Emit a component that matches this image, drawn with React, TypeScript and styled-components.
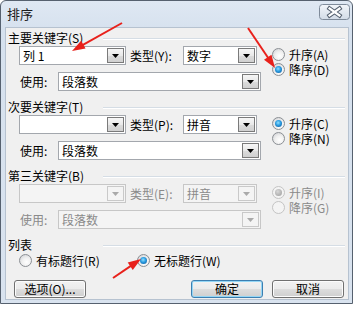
import React from "react";
import styled, { createGlobalStyle } from "styled-components";

const GlobalStyle = createGlobalStyle`
  html, body {
    margin: 0;
    padding: 0;
    background: #ffffff;
  }
  body {
    font-family: "Noto Sans CJK SC", "DejaVu Sans", sans-serif;
    font-size: 12px;
    color: #000;
  }
`;

type KeySectionProps = {
  title: string;
  keyValue: string;
  typeLabel: string;
  typeValue: string;
  asc: string;
  desc: string;
  ascChecked: boolean;
  disabled?: boolean;
};

const arrows = [
  { from: [122, 23], to: [72, 51] },
  { from: [248, 28], to: [275, 68] },
  { from: [113, 278], to: [141, 259] },
];

function arrowHead(from: number[], to: number[]) {
  const dx = to[0] - from[0];
  const dy = to[1] - from[1];
  const len = Math.sqrt(dx * dx + dy * dy);
  const ux = dx / len;
  const uy = dy / len;
  const bx = to[0] - ux * 13;
  const by = to[1] - uy * 13;
  const px = -uy * 4.5;
  const py = ux * 4.5;
  return {
    points: `${to[0]},${to[1]} ${bx + px},${by + py} ${bx - px},${by - py}`,
    end: [to[0] - ux * 10, to[1] - uy * 10],
  };
}

export default function App() {
  return (
    <>
      <GlobalStyle />
      <Window>
        <TitleBar>
          <Title>排序</Title>
          <CloseButton>
            <svg width="31" height="16" viewBox="0 0 31 16">
              <defs>
                <linearGradient id="cb" x1="0" y1="0" x2="0" y2="1">
                  <stop offset="0" stopColor="#f3f6fa" />
                  <stop offset="0.5" stopColor="#e2e8f0" />
                  <stop offset="1" stopColor="#d3dce7" />
                </linearGradient>
              </defs>
              <rect x="0.5" y="0.5" width="30" height="15" rx="3" fill="url(#cb)" stroke="#7f8b9a" />
              <path d="M10.5 4.5 L20.5 11.5 M20.5 4.5 L10.5 11.5" stroke="#55606f" strokeWidth="4.2" strokeLinecap="square" />
              <path d="M10.5 4.5 L20.5 11.5 M20.5 4.5 L10.5 11.5" stroke="#ffffff" strokeWidth="2.2" strokeLinecap="square" />
            </svg>
          </CloseButton>
        </TitleBar>
        <Body>
          <KeySection
            title="主要关键字(S)"
            keyValue="列 1"
            typeLabel="类型(Y):"
            typeValue="数字"
            asc="升序(A)"
            desc="降序(D)"
            ascChecked={false}
          />
          <KeySection
            title="次要关键字(T)"
            keyValue=""
            typeLabel="类型(P):"
            typeValue="拼音"
            asc="升序(C)"
            desc="降序(N)"
            ascChecked={true}
          />
          <KeySection
            title="第三关键字(B)"
            keyValue=""
            typeLabel="类型(E):"
            typeValue="拼音"
            asc="升序(I)"
            desc="降序(G)"
            ascChecked={true}
            disabled
          />
          <Header>
            <HeaderLabel>列表</HeaderLabel>
            <HeaderLine />
          </Header>
          <ListRow>
            <RadioItem $width={118}>
              <Radio $checked={false} />
              <span>有标题行(R)</span>
            </RadioItem>
            <RadioItem>
              <Radio $checked={true} />
              <span>无标题行(W)</span>
            </RadioItem>
          </ListRow>
          <ButtonRow>
            <Button>选项(O)...</Button>
            <ButtonGroup>
              <Button $default>确定</Button>
              <Button>取消</Button>
            </ButtonGroup>
          </ButtonRow>
        </Body>
        <Overlay width="357" height="309" viewBox="0 0 357 309">
          {arrows.map((a, i) => {
            const head = arrowHead(a.from, a.to);
            return (
              <g key={i}>
                <line
                  x1={a.from[0]}
                  y1={a.from[1]}
                  x2={head.end[0]}
                  y2={head.end[1]}
                  stroke="#e8211b"
                  strokeWidth="2"
                />
                <polygon points={head.points} fill="#e8211b" />
              </g>
            );
          })}
        </Overlay>
      </Window>
    </>
  );
}

function KeySection({ title, keyValue, typeLabel, typeValue, asc, desc, ascChecked, disabled }: KeySectionProps) {
  return (
    <Section>
      <Header>
        <HeaderLabel>{title}</HeaderLabel>
        <HeaderLine />
      </Header>
      <SectionBody>
        <Fields>
          <KeyRow>
            <Combo $w={107} value={keyValue} disabled={disabled} />
            <FieldLabel $width={57} $indent={4} $disabled={disabled}>
              {typeLabel}
            </FieldLabel>
            <Combo $w={74} value={typeValue} disabled={disabled} />
          </KeyRow>
          <UseRow>
            <FieldLabel $width={38} $disabled={disabled}>
              使用:
            </FieldLabel>
            <Combo $w={203} value="段落数" disabled={disabled} />
          </UseRow>
        </Fields>
        <Radios>
          <RadioItem $disabled={disabled}>
            <Radio $checked={ascChecked} $disabled={disabled} />
            <span>{asc}</span>
          </RadioItem>
          <RadioItem $disabled={disabled}>
            <Radio $checked={!ascChecked} $disabled={disabled} />
            <span>{desc}</span>
          </RadioItem>
        </Radios>
      </SectionBody>
    </Section>
  );
}

function Combo({ $w, value, disabled }: { $w: number; value: string; disabled?: boolean }) {
  return (
    <ComboBox $w={$w} $disabled={disabled}>
      <ComboText $disabled={disabled}>{value}</ComboText>
      <DropButton $disabled={disabled}>
        <svg width="7" height="4" viewBox="0 0 7 4">
          <path d="M0 0 H7 L3.5 4 Z" fill={disabled ? "#a9a9a9" : "#000"} />
        </svg>
      </DropButton>
    </ComboBox>
  );
}

const Window = styled.div`
  position: relative;
  width: 353px;
  height: 304px;
  box-sizing: border-box;
  border: 1px solid #56616f;
  border-radius: 6px 6px 0 0;
  background: linear-gradient(#dfe8f3, #d6e1ee 30px, #d9e3ef);
  display: flex;
  flex-direction: column;
  padding: 0 3px 3px 4px;
`;

const TitleBar = styled.div`
  height: 26px;
  display: flex;
  align-items: center;
  justify-content: space-between;
  padding: 0 0 0 2px;
`;

const Title = styled.div`
  font-size: 13px;
  color: #1b1b1b;
  line-height: 16px;
  margin-top: -1px;
`;

const CloseButton = styled.div`
  display: flex;
  margin-top: -5px;
  margin-right: -1px;
`;

const Body = styled.div`
  flex: 1;
  background: #f0f0f0;
  border: 1px solid #b6c2d0;
  padding: 2px 0 0 2px;
  display: flex;
  flex-direction: column;
  line-height: 16px;
`;

const Section = styled.div`
  display: flex;
  flex-direction: column;
  margin-bottom: 8px;
`;

const Header = styled.div`
  height: 16px;
  display: flex;
  align-items: center;
`;

const HeaderLabel = styled.div`
  width: 95px;
  white-space: nowrap;
`;

const HeaderLine = styled.div`
  flex: 1;
  margin: 2px 3px 0 0;
  border-top: 1px solid #d5dde5;
  border-bottom: 1px solid #ffffff;
`;

const SectionBody = styled.div`
  display: flex;
`;

const Fields = styled.div`
  display: flex;
  flex-direction: column;
  gap: 7px;
`;

const KeyRow = styled.div`
  display: flex;
  align-items: center;
  height: 19px;
  margin-left: 11px;
`;

const UseRow = styled.div`
  display: flex;
  align-items: center;
  height: 19px;
  margin-left: 12px;
`;

const FieldLabel = styled.span<{ $width: number; $indent?: number; $disabled?: boolean }>`
  width: ${(p) => p.$width}px;
  box-sizing: border-box;
  padding-left: ${(p) => p.$indent ?? 0}px;
  color: ${(p) => (p.$disabled ? "#8a8a8a" : "#000")};
  white-space: nowrap;
`;

const ComboBox = styled.div<{ $w: number; $disabled?: boolean }>`
  width: ${(p) => p.$w}px;
  height: 19px;
  box-sizing: border-box;
  border: 1px solid ${(p) => (p.$disabled ? "#c7c7c7" : "#a3a7ad")};
  background: ${(p) => (p.$disabled ? "#f4f4f4" : "#ffffff")};
  display: flex;
  align-items: center;
  padding: 1px;
`;

const ComboText = styled.span<{ $disabled?: boolean }>`
  flex: 1;
  padding-left: 2px;
  color: ${(p) => (p.$disabled ? "#8a8a8a" : "#000")};
  white-space: nowrap;
  overflow: hidden;
`;

const DropButton = styled.span<{ $disabled?: boolean }>`
  width: 17px;
  height: 15px;
  box-sizing: border-box;
  border: 1px solid ${(p) => (p.$disabled ? "#c9c9c9" : "#7a7a7a")};
  background: ${(p) =>
    p.$disabled ? "#f4f4f4" : "linear-gradient(#f6f6f6, #e9e9e9 50%, #dcdcdc 51%, #d0d0d0)"};
  display: flex;
  align-items: center;
  justify-content: center;
  padding-top: 1px;
`;

const Radios = styled.div`
  display: flex;
  flex-direction: column;
  margin-left: 11px;
  padding-top: 1px;
`;

const RadioItem = styled.label<{ $width?: number; $disabled?: boolean }>`
  display: flex;
  align-items: center;
  gap: 4px;
  height: 15px;
  line-height: 15px;
  white-space: nowrap;
  color: ${(p) => (p.$disabled ? "#8a8a8a" : "#000")};
  ${(p) => (p.$width ? `width: ${p.$width}px;` : "")}
`;

const Radio = styled.span<{ $checked: boolean; $disabled?: boolean }>`
  width: 13px;
  height: 13px;
  box-sizing: border-box;
  border-radius: 50%;
  border: 1px solid ${(p) => (p.$disabled ? "#c4c4c4" : "#8b8f94")};
  background: ${(p) =>
    p.$disabled
      ? "#f4f4f4"
      : "radial-gradient(circle at 60% 65%, #ffffff 0%, #f0f0f0 45%, #c9cbcf 100%)"};
  display: flex;
  align-items: center;
  justify-content: center;
  flex: none;
  &::after {
    content: "";
    display: ${(p) => (p.$checked ? "block" : "none")};
    width: 7px;
    height: 7px;
    border-radius: 50%;
    background: ${(p) =>
      p.$disabled
        ? "radial-gradient(circle at 40% 35%, #d8d8d8, #9c9c9c)"
        : "radial-gradient(circle at 45% 40%, #8fe0ff 0%, #2a9be0 45%, #0b4f91 100%)"};
  }
`;

const ListRow = styled.div`
  display: flex;
  align-items: center;
  height: 16px;
  margin: -1px 0 0 11px;
`;

const ButtonRow = styled.div`
  display: flex;
  justify-content: space-between;
  margin: 12px 4px 0 6px;
`;

const ButtonGroup = styled.div`
  display: flex;
  gap: 9px;
`;

const Button = styled.button<{ $default?: boolean }>`
  width: 72px;
  height: 18px;
  padding: 0;
  font-family: inherit;
  font-size: 12px;
  line-height: 14px;
  color: #000;
  border-radius: 3px;
  border: 1px solid ${(p) => (p.$default ? "#3c7fb1" : "#707070")};
  background: linear-gradient(#f2f2f2 0%, #ebebeb 50%, #dddddd 51%, #cfcfcf 100%);
  box-shadow: ${(p) => (p.$default ? "inset 0 0 0 1px #94d6f5" : "inset 0 0 0 1px #fcfcfc")};
`;

const Overlay = styled.svg`
  position: absolute;
  left: -1px;
  top: -1px;
  pointer-events: none;
`;
